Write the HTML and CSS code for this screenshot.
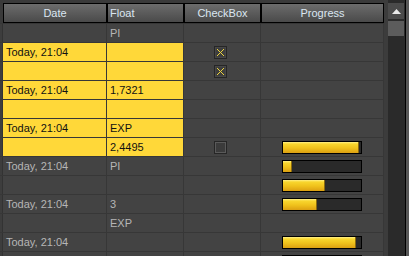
FILE: index.html
```html
<!DOCTYPE html>
<html lang="en">
<head>
<meta charset="UTF-8" />
<title>Grid</title>
<link rel="stylesheet" href="styles.css">
</head>
<body>
<div class="app">
  <div class="grid">
    <!-- заголовки колонок -->
    <div class="head">
      <div class="stub"></div>
      <div class="hcell center">Date</div>
      <div class="hcell">Float</div>
      <div class="hcell center">CheckBox</div>
      <div class="hcell center">Progress</div>
    </div>

    <div class="row">
      <div class="stub"></div>
      <div class="cell"></div>
      <div class="cell">PI</div>
      <div class="cell"></div>
      <div class="cell"></div>
    </div>
    <div class="row sel">
      <div class="stub"></div>
      <div class="cell">Today, 21:04</div>
      <div class="cell"></div>
      <div class="cell chk"><span class="box checked"><svg width="11" height="11" viewBox="0 0 11 11" shape-rendering="crispEdges"><path d="M2 2h1v1h-1z M3 3h1v1h-1z M4 4h1v1h-1z M5 5h1v1h-1z M6 6h1v1h-1z M7 7h1v1h-1z M8 8h1v1h-1z M8 2h1v1h-1z M7 3h1v1h-1z M6 4h1v1h-1z M4 6h1v1h-1z M3 7h1v1h-1z M2 8h1v1h-1z" fill="#ecd43e"/></svg></span></div>
      <div class="cell"></div>
    </div>
    <div class="row sel">
      <div class="stub"></div>
      <div class="cell"></div>
      <div class="cell"></div>
      <div class="cell chk"><span class="box checked"><svg width="11" height="11" viewBox="0 0 11 11" shape-rendering="crispEdges"><path d="M2 2h1v1h-1z M3 3h1v1h-1z M4 4h1v1h-1z M5 5h1v1h-1z M6 6h1v1h-1z M7 7h1v1h-1z M8 8h1v1h-1z M8 2h1v1h-1z M7 3h1v1h-1z M6 4h1v1h-1z M4 6h1v1h-1z M3 7h1v1h-1z M2 8h1v1h-1z" fill="#ecd43e"/></svg></span></div>
      <div class="cell"></div>
    </div>
    <div class="row sel">
      <div class="stub"></div>
      <div class="cell">Today, 21:04</div>
      <div class="cell">1,7321</div>
      <div class="cell"></div>
      <div class="cell"></div>
    </div>
    <div class="row sel">
      <div class="stub"></div>
      <div class="cell"></div>
      <div class="cell"></div>
      <div class="cell"></div>
      <div class="cell"></div>
    </div>
    <div class="row sel">
      <div class="stub"></div>
      <div class="cell">Today, 21:04</div>
      <div class="cell">EXP</div>
      <div class="cell"></div>
      <div class="cell"></div>
    </div>
    <div class="row sel">
      <div class="stub"></div>
      <div class="cell"></div>
      <div class="cell">2,4495</div>
      <div class="cell chk"><span class="box"></span></div>
      <div class="cell prog"><div class="bar"><div class="fill" style="width:97%"></div></div></div>
    </div>
    <div class="row">
      <div class="stub"></div>
      <div class="cell">Today, 21:04</div>
      <div class="cell">PI</div>
      <div class="cell"></div>
      <div class="cell prog"><div class="bar"><div class="fill" style="width:12%"></div></div></div>
    </div>
    <div class="row">
      <div class="stub"></div>
      <div class="cell"></div>
      <div class="cell"></div>
      <div class="cell"></div>
      <div class="cell prog"><div class="bar"><div class="fill" style="width:54%"></div></div></div>
    </div>
    <div class="row">
      <div class="stub"></div>
      <div class="cell">Today, 21:04</div>
      <div class="cell">3</div>
      <div class="cell"></div>
      <div class="cell prog"><div class="bar"><div class="fill" style="width:44%"></div></div></div>
    </div>
    <div class="row">
      <div class="stub"></div>
      <div class="cell"></div>
      <div class="cell">EXP</div>
      <div class="cell"></div>
      <div class="cell"></div>
    </div>
    <div class="row">
      <div class="stub"></div>
      <div class="cell">Today, 21:04</div>
      <div class="cell"></div>
      <div class="cell"></div>
      <div class="cell prog"><div class="bar"><div class="fill" style="width:94%"></div></div></div>
    </div>
    <div class="row">
      <div class="stub"></div>
      <div class="cell"></div>
      <div class="cell"></div>
      <div class="cell"></div>
      <div class="cell prog"><div class="bar"><div class="fill" style="width:80%"></div></div></div>
    </div>
  </div>

  <!-- вертикальная прокрутка -->
  <div class="vscroll">
    <div class="gap"></div>
    <div class="track">
      <div class="arrow"><svg width="9" height="5" viewBox="0 0 9 5"><path d="M0 5 L4.5 0 L9 5 Z" fill="#e8e8e8"/></svg></div>
      <div class="thumb"></div>
    </div>
    <div class="edge"></div>
    <div class="rim"></div>
  </div>
</div>
</body>
</html>
```

FILE: styles.css
```css
/* Общие стили */
html, body {
  margin: 0; padding: 0;
  background: #3a3a3a;
  font-family: 'Liberation Sans', Arial, sans-serif;
  font-size: 11px;
  overflow: hidden;
}
.app {
  display: flex;
  height: 256px;
  width: 409px;
  overflow: hidden;
}
.grid {
  width: 384px;
  display: flex;
  flex-direction: column;
  flex-shrink: 0;
}

/* шапка */
.head {
  display: grid;
  grid-template-columns: 3px 104px 77px 77px 123px;
  padding-top: 3px;
  height: 20px;
  background: #3a3a3a;
}
.head .stub { background: #3a3a3a; border: none; }
.hcell {
  box-sizing: border-box;
  border: 1px solid #000;
  background: linear-gradient(#6c6c6c, #4a4a4a);
  color: #dbe6f1;
  line-height: 19px;
  padding-left: 2px;
  white-space: nowrap;
  overflow: hidden;
}
.hcell.center { text-align: center; padding-left: 0; }

/* строки */
.row {
  display: grid;
  grid-template-columns: 3px 104px 77px 77px 123px;
  height: 18px;
  border-top: 1px solid #373737;
  background: #434343;
  flex-shrink: 0;
}
.stub {
  background: #3d3d3d;
  border-right: 1px solid #333;
  box-sizing: border-box;
}
.cell {
  box-sizing: border-box;
  border-right: 1px solid #373737;
  color: #b6b6b6;
  line-height: 18px;
  padding-left: 3px;
  white-space: nowrap;
  overflow: hidden;
}
.row.sel .cell:nth-child(2),
.row.sel .cell:nth-child(3) {
  background: #ffd839;
  color: #111;
}

/* чекбокс */
.chk {
  display: flex;
  align-items: center;
  padding-left: 30px;
}
.box {
  box-sizing: border-box;
  width: 13px;
  height: 13px;
  border: 1px solid #262626;
  background: #3b3b3b;
  box-shadow: inset 0 0 0 1px #5a5a5a;
  display: flex;
}
.box.checked {
  box-shadow: inset 0 0 0 1px #474747;
  background: #3e3e3e;
}

/* прогресс */
.prog {
  display: flex;
  justify-content: center;
  padding: 3px 0 0 0;
}
.bar {
  box-sizing: border-box;
  width: 80px;
  height: 13px;
  border: 1px solid #000;
  background: #2a2a2a;
}
.fill {
  height: 100%;
  background: linear-gradient(#fff08a 0, #f8d62e 18%, #f0c21c 55%, #dca012 100%);
  border-right: 1px solid #8a6a10;
  box-sizing: border-box;
}

/* скроллбар */
.vscroll {
  display: flex;
  width: 25px;
  flex-shrink: 0;
}
.vscroll .gap { width: 4px; background: #3c3c3c; }
.vscroll .track {
  width: 17px;
  background: #2a2a2a;
  display: flex;
  flex-direction: column;
  padding-top: 3px;
  gap: 2px;
}
.arrow {
  height: 16px;
  width: 16px;
  background: #4a4a4a;
  display: flex;
  align-items: center;
  justify-content: center;
}
.thumb {
  height: 15px;
  width: 16px;
  background: #5c5c5c;
}
.vscroll .edge { width: 1px; background: #000; }
.vscroll .rim { width: 3px; background: #585858; }
```
